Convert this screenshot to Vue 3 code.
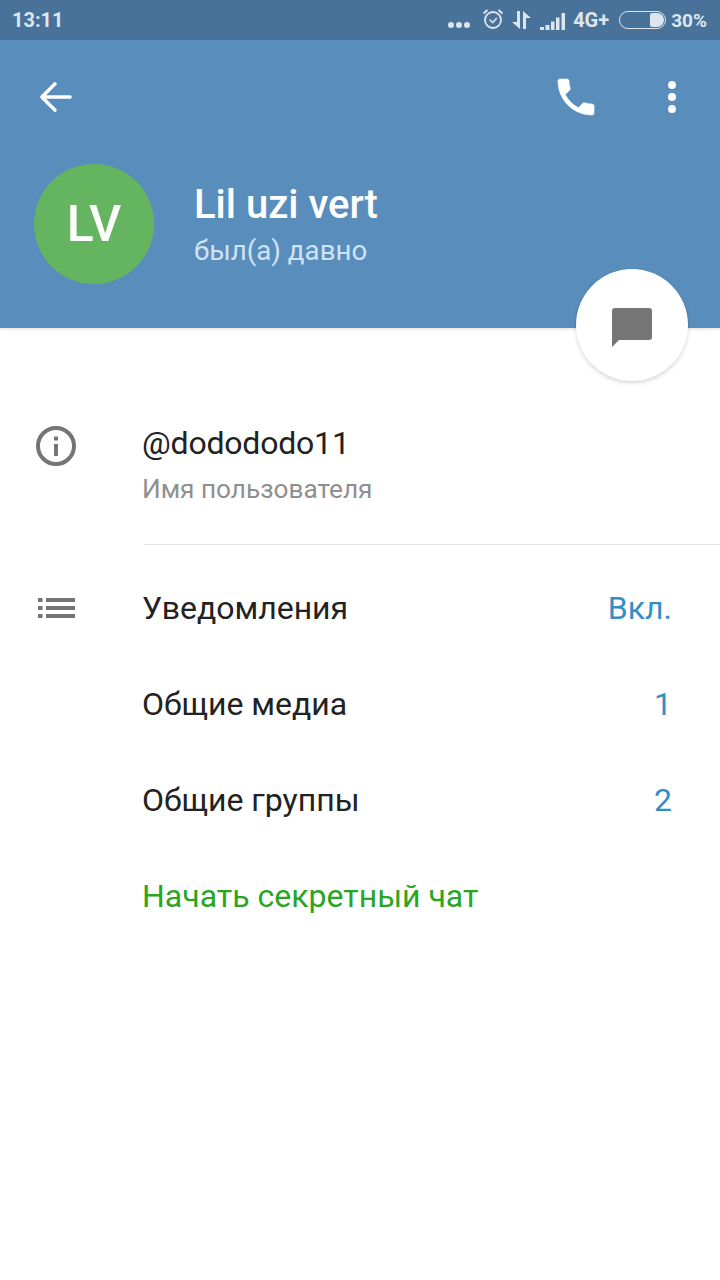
<script setup>
const rows = [
  { label: 'Уведомления', value: 'Вкл.', icon: true },
  { label: 'Общие медиа', value: '1' },
  { label: 'Общие группы', value: '2' },
  { label: 'Начать секретный чат', green: true }
]
</script>

<template>
  <div class="page">
    <header class="head">
      <div class="status">
        <span class="time">13:11</span>
        <div class="sys">
          <span class="dots"><i></i><i></i><i></i></span>
          <svg class="alarm" width="22" height="22" viewBox="0 0 22 22" fill="none" stroke="#dde6ee">
            <circle cx="11" cy="12" r="8" stroke-width="1.8"/>
            <path d="M7.500 11.500l3.300 3 4-4.500" stroke-width="1.600"/>
            <path d="M1.500 5.500L5.500 2M20.500 5.500L16.500 2" stroke-width="2"/>
          </svg>
          <svg class="updown" width="19" height="20" viewBox="0 0 19 20" fill="#dde6ee">
            <path d="M5 1h3v18L0 12h5zM11 1l8 7h-5v11h-3z"/>
          </svg>
          <svg class="signal" width="26" height="18" viewBox="0 0 26 18" fill="#dde6ee">
            <path d="M0 15h4v3H0zM5.500 13h4v5h-4zM11 9.500h3.500V18H11zM16 5.500h3.500V18H16zM21.500 1H25v17h-3.500z"/>
          </svg>
          <span class="net">4G+</span>
          <span class="batt"><b></b></span>
          <span class="pct">30%</span>
        </div>
      </div>
      <div class="bar">
        <svg width="34" height="34" viewBox="0 0 36 36" fill="none" stroke="#fff" stroke-width="3.600" stroke-linecap="round" stroke-linejoin="round">
          <path d="M3 18h30M17 4L3 18l14 14"/>
        </svg>
        <div class="actions">
          <svg class="phone" width="48" height="48" viewBox="0 0 24 24" fill="#fff" stroke="#fff" stroke-width=".3">
            <path d="M6.620 10.790c1.440 2.830 3.760 5.140 6.590 6.590l2.200-2.200c.27-.27.67-.36 1.020-.24 1.120.37 2.330.57 3.570.57.550 0 1 .45 1 1V20c0 .550-.45 1-1 1-9.390 0-17-7.610-17-17 0-.55.45-1 1-1h3.500c.550 0 1 .45 1 1 0 1.250.2 2.450.57 3.570.11.350.03.740-.25 1.020l-2.200 2.200z"/>
          </svg>
          <span class="more"><i></i><i></i><i></i></span>
        </div>
      </div>
      <div class="user">
        <div class="avatar">LV</div>
        <div class="who">
          <div class="name">Lil uzi vert</div>
          <div class="seen">был(а) давно</div>
        </div>
      </div>
      <div class="fab">
        <svg width="40" height="39" viewBox="0 0 40 39" fill="#757575">
          <path d="M3 0h34a3 3 0 0 1 3 3v26a3 3 0 0 1-3 3H7l-7 7V3a3 3 0 0 1 3-3z"/>
        </svg>
      </div>
    </header>

    <main class="body">
      <section class="info">
        <svg class="info-ic" width="40" height="40" viewBox="0 0 40 40">
          <circle cx="20" cy="20" r="18" fill="none" stroke="#757575" stroke-width="4"/>
          <rect x="18" y="18" width="4" height="12" fill="#757575"/>
          <rect x="18" y="10.500" width="4" height="4" fill="#757575"/>
        </svg>
        <div class="info-text">
          <div class="handle">@dodododo11</div>
          <div class="hint">Имя пользователя</div>
        </div>
      </section>
      <div class="rule"></div>
      <ul class="rows">
        <li v-for="r in rows" :key="r.label" class="row">
          <span class="slot">
            <svg v-if="r.icon" width="38" height="22" viewBox="0 0 38 22" fill="#757575">
              <path d="M0 1h4.500v4H0zM8 1h29v4H8zM0 9h4.500v4H0zM8 9h29v4H8zM0 17h4.500v4H0zM8 17h29v4H8z"/>
            </svg>
          </span>
          <span class="label" :class="{ green: r.green }">{{ r.label }}</span>
          <span v-if="r.value" class="value">{{ r.value }}</span>
        </li>
      </ul>
    </main>
  </div>
</template>

<style>
html, body { margin: 0; background: #fff; }
</style>

<style scoped>
.page { width: 720px; height: 1280px; background: #fff; font-family: Roboto, "Noto Sans", sans-serif; overflow: hidden; }
.head { position: relative; height: 328px; background: #598dbc; box-shadow: 0 1px 3px rgba(0,0,0,.14); }
.status { height: 40px; background: #48729a; display: flex; align-items: center; justify-content: space-between; padding: 0 13px 0 12px; box-sizing: border-box; color: #dde6ee; font-weight: 700; font-size: 20px; }
.sys { display: flex; align-items: center; }
.dots { display: flex; gap: 2px; margin-top: 9px; margin-right: 12px; }
.dots i { width: 6px; height: 6px; border-radius: 50%; background: #dde6ee; }
.alarm { margin-right: 8px; margin-top: -2px; }
.updown { margin-right: 9px; }
.signal { margin-right: 7px; margin-top: 1px; }
.net { margin-right: 10px; }
.batt { width: 45px; height: 16px; border: 1.500px solid #dde6ee; border-radius: 9px; margin-right: 5px; position: relative; }
.batt b { position: absolute; right: 1px; top: 1px; bottom: 1px; width: 14px; background: #dde6ee; border-radius: 2px 7px 7px 2px; }
.pct { font-size: 19px; }
.bar { height: 112px; display: flex; align-items: center; justify-content: space-between; padding: 2px 44px 0 39px; box-sizing: border-box; }
.actions { display: flex; align-items: center; gap: 68px; }
.more { display: flex; flex-direction: column; gap: 4px; }
.more i { width: 8px; height: 8px; border-radius: 50%; background: #fff; }
.user { display: flex; align-items: center; gap: 40px; padding-left: 34px; margin-top: 12px; }
.avatar { width: 120px; height: 120px; border-radius: 50%; background: #65b560; color: #fff; font-size: 50px; font-weight: 500; display: flex; align-items: center; justify-content: center; }
.who { padding-top: 4px; }
.name { color: #fff; font-size: 40px; font-weight: 500; line-height: 46px; margin-top: -3px; }
.seen { color: #cfe3f5; font-size: 27.700px; line-height: 32px; margin-top: 7px; }
.fab { position: absolute; left: 576px; top: 269px; width: 112px; height: 112px; border-radius: 50%; background: #fff; box-shadow: 0 2px 4px rgba(0,0,0,.16); display: flex; align-items: center; justify-content: center; }
.fab svg { margin-top: 5px; }
.info { display: flex; padding: 90px 0 0 36px; height: 216px; box-sizing: border-box; }
.info-ic { margin-top: 8px; }
.info-text { margin-left: 66px; }
.handle { font-size: 32px; line-height: 50px; color: #222; letter-spacing: -.2px; }
.hint { font-size: 26.200px; line-height: 32px; color: #8f8f8f; margin-top: 5px; }
.rule { height: 1px; background: #e2e2e2; margin-left: 144px; margin-bottom: 15px; }
.rows { list-style: none; margin: 0; padding: 0; }
.row { height: 96px; display: flex; align-items: center; padding-right: 48px; }
.slot { width: 142px; padding-left: 38px; box-sizing: border-box; display: flex; }
.label { font-size: 32px; color: #222; flex: 1; }
.green { color: #2aa51f; }
.value { font-size: 32px; color: #348ec6; }
</style>
